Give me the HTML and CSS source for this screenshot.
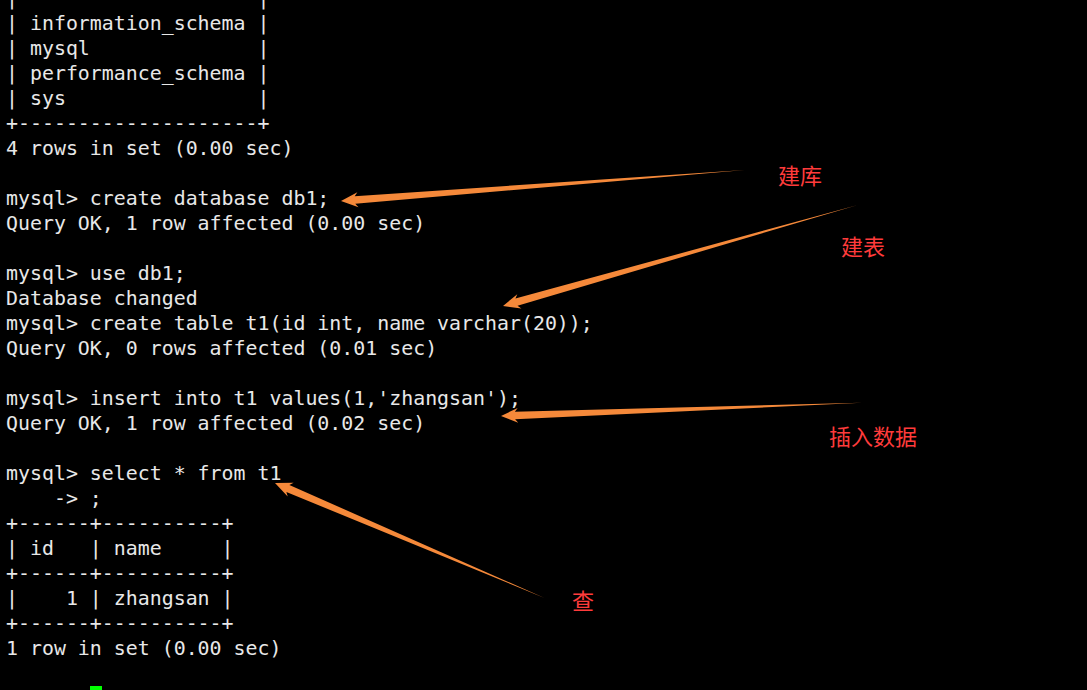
FILE: index.html
```html
<!DOCTYPE html>
<html lang="zh">
<head>
<meta charset="utf-8">
<title>mysql terminal</title>
<link rel="stylesheet" href="styles.css">
</head>
<body>
<div class="screen">
<pre class="term">|                    |
| information_schema |
| mysql              |
| performance_schema |
| sys                |
+--------------------+
4 rows in set (0.00 sec)

mysql&gt; create database db1;
Query OK, 1 row affected (0.00 sec)

mysql&gt; use db1;
Database changed
mysql&gt; create table t1(id int, name varchar(20));
Query OK, 0 rows affected (0.01 sec)

mysql&gt; insert into t1 values(1,'zhangsan');
Query OK, 1 row affected (0.02 sec)

mysql&gt; select * from t1
    -&gt; ;
+------+----------+
| id   | name     |
+------+----------+
|    1 | zhangsan |
+------+----------+
1 row in set (0.00 sec)

mysql&gt; <span class="cursor"></span></pre>

<svg class="arrows" width="1087" height="690" viewBox="0 0 1087 690" aria-hidden="true">
  <g fill="#f5893a">
    <polygon transform="translate(341 201) rotate(175.6)" points="0,0 -17,-7.5 -14,-3.8 -405,0 -14,3.8 -17,7.5"/>
    <polygon transform="translate(503 306) rotate(164.1)" points="0,0 -17,-7.5 -14,-3.8 -368,0 -14,3.8 -17,7.5"/>
    <polygon transform="translate(501 416) rotate(177.9)" points="0,0 -17,-7.5 -14,-3.8 -361,0 -14,3.8 -17,7.5"/>
    <polygon transform="translate(275 483) rotate(203.1)" points="0,0 -17,-7.5 -14,-3.8 -293,0 -14,3.8 -17,7.5"/>
  </g>
</svg>

<div class="label label-db">建库</div>
<div class="label label-table">建表</div>
<div class="label label-insert">插入数据</div>
<div class="label label-select">查</div>
</div>
</body>
</html>
```

FILE: styles.css
```css
html, body {
  margin: 0;
  padding: 0;
  background: #000;
  overflow: hidden;
}

.screen {
  position: relative;
  width: 1087px;
  height: 690px;
  overflow: hidden;
  background: #000;
}

.term {
  margin: -14px 0 0 0;
  padding: 0 0 0 6px;
  font-family: "DejaVu Sans Mono", "Liberation Mono", monospace;
  font-size: 19.9px;
  line-height: 25px;
  color: #e8e8e8;
  white-space: pre;
}

.cursor {
  display: inline-block;
  width: 12px;
  height: 25px;
  vertical-align: top;
  background: #00ff00;
}

.arrows {
  position: absolute;
  left: 0;
  top: 0;
}

.label {
  position: absolute;
  font-family: "Noto Sans CJK SC", "Noto Sans", sans-serif;
  font-size: 22px;
  line-height: 22px;
  color: #ff3b3b;
  white-space: nowrap;
}

.label-db { left: 778px; top: 163px; }
.label-table { left: 841px; top: 234px; }
.label-insert { left: 829px; top: 424px; }
.label-select { left: 572px; top: 588px; }
```
